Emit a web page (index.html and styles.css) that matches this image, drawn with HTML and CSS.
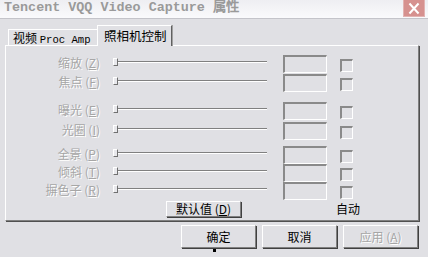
FILE: index.html
```html
<!DOCTYPE html>
<html lang="zh-CN">
<head>
    <meta charset="UTF-8">
    <title>Tencent VQQ Video Capture 属性</title>
    <link rel="stylesheet" href="styles.css">
</head>
<body>

    <div class="window">
        <div class="titlebar">
            <span class="title">Tencent VQQ Video Capture 属性</span>
            <span class="close">
                <svg width="22" height="17" viewBox="0 0 22 17">
                    <path d="M6 3 L16 14 M16 3 L6 14" stroke="#fff" stroke-width="2.2" fill="none"/>
                </svg>
            </span>
        </div>

        <div class="tabs">
            <div class="tab">视频 <span class="mono">Proc Amp</span></div>
            <div class="tab active">照相机控制</div>
        </div>

        <div class="panel">
            <div class="group g1">
                <div class="row">
                    <span class="label">缩放 (<u>Z</u>)</span>
                    <div class="slider"><i class="thumb"></i><i class="track"></i></div>
                    <div class="field"></div>
                    <div class="check"></div>
                </div>
                <div class="row">
                    <span class="label">焦点 (<u>F</u>)</span>
                    <div class="slider"><i class="thumb"></i><i class="track"></i></div>
                    <div class="field"></div>
                    <div class="check"></div>
                </div>
            </div>
            <div class="group g2">
                <div class="row">
                    <span class="label">曝光 (<u>E</u>)</span>
                    <div class="slider"><i class="thumb"></i><i class="track"></i></div>
                    <div class="field"></div>
                    <div class="check"></div>
                </div>
                <div class="row">
                    <span class="label">光圈 (<u>I</u>)</span>
                    <div class="slider"><i class="thumb"></i><i class="track"></i></div>
                    <div class="field"></div>
                    <div class="check"></div>
                </div>
            </div>
            <div class="group g3">
                <div class="row">
                    <span class="label">全景 (<u>P</u>)</span>
                    <div class="slider"><i class="thumb"></i><i class="track"></i></div>
                    <div class="field"></div>
                    <div class="check"></div>
                </div>
                <div class="row">
                    <span class="label">倾斜 (<u>T</u>)</span>
                    <div class="slider"><i class="thumb"></i><i class="track"></i></div>
                    <div class="field"></div>
                    <div class="check"></div>
                </div>
                <div class="row">
                    <span class="label">摒色子 (<u>R</u>)</span>
                    <div class="slider"><i class="thumb"></i><i class="track"></i></div>
                    <div class="field"></div>
                    <div class="check"></div>
                </div>
            </div>
            <div class="panel-foot">
                <button class="btn small">默认值 (<u>D</u>)</button>
                <span class="auto">自动</span>
            </div>
        </div>

        <div class="actions">
            <button class="btn default">确定<i class="dot"></i></button>
            <button class="btn">取消</button>
            <button class="btn disabled">应用 (<u>A</u>)</button>
        </div>
    </div>

</body>
</html>
```

FILE: styles.css
```css
body {
    margin: 0;
    background: #e0e0e4;
    font-family: "Noto Sans CJK SC", "DejaVu Sans", sans-serif;
    font-size: 12px;
    color: #000;
}
.window {
    width: 428px;
    height: 257px;
    overflow: hidden;
}
.titlebar {
    height: 18px;
    display: flex;
    align-items: flex-start;
    justify-content: space-between;
    background: linear-gradient(#eeeef2, #fafafc);
    border-bottom: 1px solid #c4c4ca;
}
.title {
    font-family: "Liberation Mono", monospace;
    font-weight: bold;
    font-size: 13.4px;
    line-height: 16px;
    color: #9a9a9a;
    padding-left: 4px;
    white-space: nowrap;
}
.close {
    width: 22px;
    height: 17px;
    margin-right: 3px;
    background: #d6918f;
    border: 1px solid #e2b3b2;
    border-top: none;
    box-sizing: border-box;
    display: flex;
}
.tabs {
    display: flex;
    align-items: flex-end;
    height: 21px;
    margin-top: 6px;
    padding-left: 8px;
    position: relative;
    z-index: 1;
    margin-bottom: -1px;
}
.tab {
    width: 89px;
    height: 16px;
    box-sizing: border-box;
    border-top: 1px solid #fff;
    border-left: 1px solid #fff;
    padding-left: 4px;
    line-height: 15px;
    white-space: nowrap;
    margin-bottom: 1px;
}
.mono {
    font-family: "Liberation Mono", monospace;
    font-size: 10.6px;
}
.tab.active {
    width: 75px;
    height: 21px;
    margin-bottom: 0;
    padding-left: 6px;
    font-size: 12.5px;
    line-height: 19px;
    background: #e0e0e4;
    border-right: 1px solid #606060;
    box-shadow: 1px 0 0 #a0a0a0;
}
.panel {
    margin-left: 5px;
    width: 414px;
    height: 176px;
    box-sizing: border-box;
    border-top: 1px solid #fff;
    border-left: 1px solid #fff;
    border-right: 1px solid #808080;
    border-bottom: 1px solid #808080;
    box-shadow: 1px 1px 0 #505050;
    padding-top: 9px;
}
.group {
    display: flex;
    flex-direction: column;
    gap: 1px;
}
.g2 {
    margin-top: 10px;
    gap: 2px;
}
.g3 {
    margin-top: 6px;
    gap: 0;
}
.row {
    display: flex;
    align-items: flex-start;
    height: 18px;
}
.label {
    width: 94px;
    text-align: right;
    color: #a6a6a6;
    text-shadow: 1px 1px 0 #fff;
    line-height: 16px;
    white-space: nowrap;
}
.slider {
    width: 154px;
    margin-left: 13px;
    margin-top: 3px;
    height: 8px;
    display: flex;
    align-items: center;
}
.thumb {
    width: 5px;
    height: 8px;
    box-sizing: border-box;
    border-top: 1px solid #fff;
    border-left: 1px solid #fff;
    border-right: 1px solid #707070;
    border-bottom: 1px solid #707070;
    background: #e8e8ec;
}
.track {
    flex: 1;
    height: 2px;
    box-sizing: border-box;
    border-top: 1px solid #808080;
    border-bottom: 1px solid #fff;
}
.field {
    width: 44px;
    height: 18px;
    margin-left: 16px;
    box-sizing: border-box;
    border-top: 2px solid #8a8a8a;
    border-left: 2px solid #8a8a8a;
    border-right: 1px solid #fff;
    border-bottom: 1px solid #fff;
}
.check {
    width: 13px;
    height: 13px;
    margin-left: 13px;
    margin-top: 4px;
    box-sizing: border-box;
    border-top: 2px solid #8a8a8a;
    border-left: 2px solid #8a8a8a;
    border-right: 1px solid #fff;
    border-bottom: 1px solid #fff;
}
.panel-foot {
    display: flex;
    align-items: center;
    margin-top: 1px;
}
.btn {
    font-family: inherit;
    font-size: 12px;
    color: #000;
    background: #e0e0e4;
    padding: 0;
    box-sizing: border-box;
    border-top: 1px solid #fff;
    border-left: 1px solid #fff;
    border-right: 1px solid #808080;
    border-bottom: 1px solid #808080;
    box-shadow: 1px 1px 0 #404040;
    width: 75px;
    height: 23px;
    line-height: 20px;
    position: relative;
}
.btn.small {
    margin-left: 160px;
    height: 16px;
    line-height: 14px;
}
.auto {
    margin-left: 95px;
    margin-top: -2px;
}
.actions {
    display: flex;
    justify-content: flex-end;
    gap: 6px;
    margin-top: 4px;
    padding-right: 10px;
}
.btn.disabled {
    color: #a6a6a6;
    text-shadow: 1px 1px 0 #fff;
}
.dot {
    position: absolute;
    left: 31px;
    bottom: -5px;
    width: 3px;
    height: 3px;
    background: #000;
}
```
